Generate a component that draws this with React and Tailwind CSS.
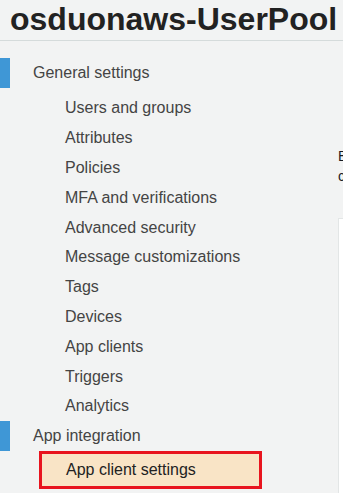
import React from "react";

const generalItems = [
  "Users and groups",
  "Attributes",
  "Policies",
  "MFA and verifications",
  "Advanced security",
  "Message customizations",
  "Tags",
  "Devices",
  "App clients",
  "Triggers",
  "Analytics",
];

const SectionHeader = ({ label }) => (
  <div className="flex h-[30px] items-center">
    <div className="h-full w-[10px] bg-[#3f97d6]" />
    <span className="ml-[23px] text-[16px] text-[#444]">{label}</span>
  </div>
);

const App = () => {
  return (
    <div
      className="h-[493px] w-[343px] overflow-hidden bg-[#f2f3f3]"
      style={{ fontFamily: '"Liberation Sans", Arial, sans-serif' }}
    >
      {/* Page title */}
      <div className="h-[41px] border-b border-[#d5dbdb] pt-[3px] pl-[10px]">
        <h1 className="whitespace-nowrap text-[32px] font-bold leading-none text-[#222]">
          osduonaws-UserPool
        </h1>
      </div>

      <div className="flex">
        {/* Side navigation */}
        <nav className="w-[338px] shrink-0 pt-[17px]">
          <SectionHeader label="General settings" />
          <ul className="mt-[5.5px]">
            {generalItems.map((item) => (
              <li
                key={item}
                className="flex h-[29.8px] items-center pl-[65px] text-[16px] text-[#444]"
              >
                {item}
              </li>
            ))}
          </ul>
          <SectionHeader label="App integration" />
          <div className="ml-[39px] flex h-[38px] w-[223px] items-center border-[3px] border-[#e8141e] bg-[#f9e4c6] pl-[24px] text-[16px] text-[#222]">
            App client settings
          </div>
        </nav>

        {/* Main content, cut off at the right edge */}
        <main className="min-w-0 flex-1 overflow-hidden pt-[105px]">
          <p className="whitespace-nowrap text-[14px] leading-[20px] text-[#16191f]">
            Before you can use hosted sign-in pages,
          </p>
          <p className="whitespace-nowrap text-[14px] leading-[20px] text-[#16191f]">
            configure your app client settings.
          </p>
          <div className="mt-[32px] h-[300px] border-t border-l border-[#e3e6e6] bg-white" />
        </main>
      </div>
    </div>
  );
};

export default App;
